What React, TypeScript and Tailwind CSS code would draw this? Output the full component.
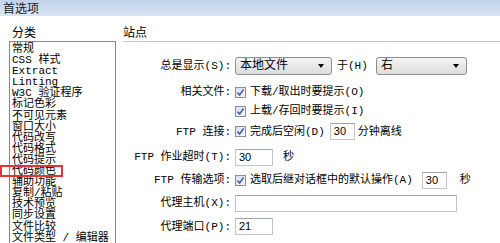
import React from 'react';

// Win7-style "首选项" dialog, 站点 page
const categories = [
  '常规',
  'CSS 样式',
  'Extract',
  'Linting',
  'W3C 验证程序',
  '标记色彩',
  '不可见元素',
  '窗口大小',
  '代码改写',
  '代码格式',
  '代码提示',
  '代码颜色',
  '辅助功能',
  '复制/粘贴',
  '技术预览',
  '同步设置',
  '文件比较',
  '文件类型 / 编辑器',
];

function CheckBox() {
  return (
    <span className="w-[11px] h-[11px] shrink-0 border border-[#8e8f8f] bg-linear-to-br from-[#d9deef] to-[#f7f8fc] flex items-center justify-center">
      <svg width="9" height="9" viewBox="0 0 9 9">
        <path d="M1.5 4.6 L3.6 7 L7.6 1.6" fill="none" stroke="#4a5fa3" strokeWidth="1.6" />
      </svg>
    </span>
  );
}

function Select({ value, className }: { value: string; className: string }) {
  return (
    <div
      className={`h-[18px] shrink-0 border border-[#8e8f8f] rounded-[3px] bg-linear-to-b from-[#f4f4f4] to-[#dcdcdc] flex items-center justify-between pl-[4px] pr-[7px] ${className}`}
    >
      <span className="text-[12px] leading-none">{value}</span>
      <span className="w-0 h-0 border-l-[3px] border-r-[3px] border-t-[4px] border-l-transparent border-r-transparent border-t-black" />
    </div>
  );
}

function TextBox({ value, className }: { value?: string; className: string }) {
  return (
    <div
      className={`h-[17px] shrink-0 border border-[#c3c5cb] border-t-[#9ea2ab] bg-white pl-[3px] flex items-center font-['Liberation_Sans',sans-serif] text-[11px] leading-none text-black ${className}`}
    >
      {value}
    </div>
  );
}

function Row({ label, className, children }: { label?: string; className: string; children?: React.ReactNode }) {
  return (
    <div className={`flex items-center ${className}`}>
      <div className="w-[108px] shrink-0 text-right whitespace-nowrap">{label}</div>
      <div className="flex items-center pl-[4px] whitespace-nowrap">{children}</div>
    </div>
  );
}

export default function App() {
  return (
    <div className="relative w-[500px] h-[243px] overflow-hidden bg-white flex flex-col font-['Liberation_Mono','Noto_Sans_CJK_SC',monospace] text-[11px] text-black">
      {/* Title bar */}
      <div className="h-[16px] shrink-0 bg-linear-to-b from-[#c0d3ea] to-[#d9e5f3] pl-[3px] text-[12px] leading-[16px] text-[#1b1b1b] font-['Noto_Sans_CJK_SC',sans-serif]">
        首选项
      </div>

      <div className="flex flex-1 min-h-0">
        {/* Category list */}
        <div className="w-[116px] shrink-0 pl-[9px] flex flex-col">
          <div className="h-[25px] pt-[11px] pl-[3px] text-[12px] leading-[14px]">分类</div>
          <div className="flex-1 border-l border-t border-r border-[#828790] overflow-hidden pl-[2px] pt-[2px] leading-[11.1px]">
            {categories.map((c) => (
              <div key={c} className="whitespace-nowrap">
                {c}
              </div>
            ))}
          </div>
        </div>

        {/* Site settings */}
        <div className="flex-1 pl-[7px] flex flex-col">
          <div className="h-[26px] pt-[11px] border-b border-[#c8c8c8] text-[12px] leading-[14px]">站点</div>

          <div className="flex flex-col leading-[12px]">
            <Row label="总是显示(S):" className="mt-[15px] h-[18px]">
              <Select value="本地文件" className="w-[97px]" />
              <span className="ml-[5px] w-[39px]">于(H)</span>
              <Select value="右" className="w-[91px]" />
            </Row>
            <Row label="相关文件:" className="mt-[9px] h-[16px]">
              <CheckBox />
              <span className="ml-[4px]">下载/取出时要提示(O)</span>
            </Row>
            <Row className="mt-[3px] h-[16px]">
              <CheckBox />
              <span className="ml-[4px]">上载/存回时要提示(I)</span>
            </Row>
            <Row label="FTP 连接:" className="mt-[4px] h-[17px]">
              <CheckBox />
              <span className="ml-[4px]">完成后空闲(D)</span>
              <TextBox value="30" className="ml-[5px] w-[25px]" />
              <span className="ml-[3px]">分钟离线</span>
            </Row>
            <Row label="FTP 作业超时(T):" className="mt-[9px] h-[16px]">
              <TextBox value="30" className="w-[38px]" />
              <span className="ml-[10px]">秒</span>
            </Row>
            <Row label="FTP 传输选项:" className="mt-[7px] h-[16px]">
              <CheckBox />
              <span className="ml-[4px]">选取后继对话框中的默认操作(A)</span>
              <TextBox value="30" className="ml-[9px] w-[25px]" />
              <span className="ml-[13px]">秒</span>
            </Row>
            <Row label="代理主机(X):" className="mt-[7px] h-[16px]">
              <TextBox className="w-[222px]" />
            </Row>
            <Row label="代理端口(P):" className="mt-[7px] h-[17px]">
              <TextBox value="21" className="w-[38px]" />
            </Row>
          </div>
        </div>
      </div>

      {/* highlight marker over the list */}
      <div className="absolute left-0 top-[165px] w-[63px] h-[12px] border-2 border-[#e3343c]" />
    </div>
  );
}
